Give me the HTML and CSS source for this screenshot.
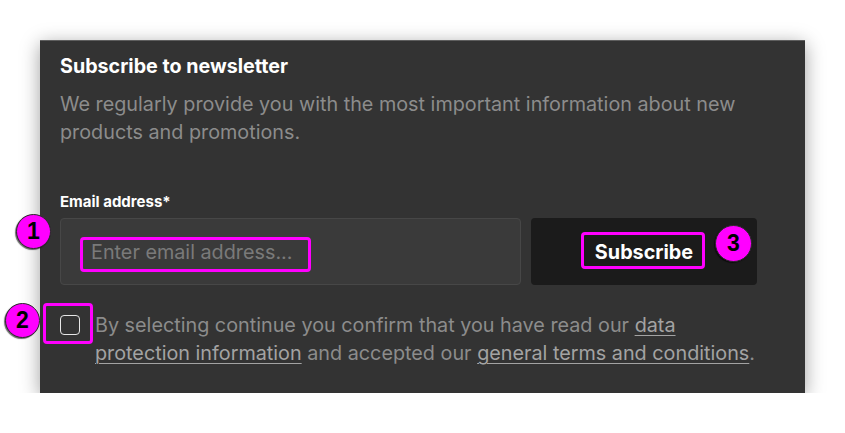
FILE: index.html
```html
<!DOCTYPE html>
<html>
<head>
<meta charset="utf-8">
<link rel="stylesheet" href="styles.css">
</head>
<body>
<div class="panel">
  <h2 class="title">Subscribe to newsletter</h2>
  <p class="desc">We regularly provide you with the most important information about new products and promotions.</p>
  <div class="label">Email address*</div>
  <div class="row">
    <div class="input">
      <span class="placeholder">Enter email address...</span>
      <span class="mark mark-input"></span>
    </div>
    <div class="button">
      <span class="btn-text">Subscribe</span>
      <span class="mark mark-btn"></span>
    </div>
  </div>
  <div class="consent">
    <div class="checkbox">
      <span class="mark mark-check"></span>
    </div>
    <p class="consent-text">By selecting continue you confirm that you have read our <a class="link">data protection information</a> and accepted our <a class="link">general terms and conditions</a>.</p>
  </div>
  <span class="badge badge-1">1</span>
  <span class="badge badge-2">2</span>
  <span class="badge badge-3">3</span>
</div>
</body>
</html>
```
FILE: styles.css
```css
html, body {
  margin: 0;
  padding: 0;
  background: #ffffff;
}
body {
  font-family: Inter, "Noto Sans", sans-serif;
}
.panel {
  position: relative;
  box-sizing: border-box;
  margin: 40px 0 0 40px;
  width: 765px;
  height: 353px;
  background: #333333;
  border-top: 1px solid #5e5e5e;
  padding: 13px 38px 0 20px;
  box-shadow: 0 4px 18px rgba(0, 0, 0, 0.38);
}
.title {
  margin: 0;
  font-size: 19.7px;
  line-height: 24px;
  font-weight: 700;
  color: #ffffff;
}
.desc {
  margin: 12px 0 0;
  font-size: 19.8px;
  line-height: 28px;
  color: #8c8c8c;
}
.label {
  margin-top: 47px;
  font-size: 15px;
  line-height: 17px;
  font-weight: 700;
  color: #ffffff;
}
.row {
  display: flex;
  gap: 10px;
  margin-top: 8px;
  height: 67px;
}
.input {
  position: relative;
  box-sizing: border-box;
  width: 461px;
  background: #3a3a3a;
  border: 1px solid #474747;
  border-radius: 4px;
  display: flex;
  align-items: center;
  padding-left: 30px;
}
.placeholder {
  font-size: 19.8px;
  color: #7a7a7a;
  margin-top: 1px;
}
.button {
  position: relative;
  width: 226px;
  background: #1b1b1b;
  border-radius: 4px;
  display: flex;
  align-items: center;
  justify-content: center;
}
.btn-text {
  font-size: 19.8px;
  font-weight: 700;
  color: #ffffff;
  margin-top: 1px;
}
.mark {
  position: absolute;
  box-sizing: border-box;
  border: 3px solid #ff00ff;
  border-radius: 4px;
}
.mark-input {
  left: 19px;
  top: 18px;
  width: 231px;
  height: 35px;
}
.mark-btn {
  left: 50px;
  top: 14px;
  width: 124px;
  height: 37px;
}
.consent {
  display: flex;
  gap: 15px;
  margin-top: 26px;
}
.checkbox {
  position: relative;
  box-sizing: border-box;
  flex: none;
  width: 20px;
  height: 20px;
  margin-top: 4px;
  border: 1.5px solid #e6e6e6;
  border-radius: 4px;
}
.mark-check {
  left: -18px;
  top: -13px;
  width: 50px;
  height: 41px;
}
.consent-text {
  margin: 0;
  font-size: 19.8px;
  line-height: 28px;
  color: #8c8c8c;
}
.link {
  color: #a3a3a3;
  text-decoration: underline;
  text-underline-offset: 3px;
  text-decoration-thickness: 1px;
}
.badge {
  position: absolute;
  box-sizing: border-box;
  width: 35px;
  height: 35px;
  border-radius: 50%;
  background: #ff00ff;
  border: 1px solid #2a2a2a;
  box-shadow: -1px 1px 1px rgba(0, 0, 0, 0.6);
  color: #000000;
  font-family: "Liberation Sans", Arial, sans-serif;
  font-weight: 700;
  font-size: 23px;
  line-height: 33px;
  text-align: center;
}
.badge-1 {
  left: -24px;
  top: 173px;
}
.badge-2 {
  left: -35px;
  top: 262px;
}
.badge-3 {
  left: 675px;
  top: 184px;
  width: 37px;
  height: 37px;
  line-height: 35px;
}
```
